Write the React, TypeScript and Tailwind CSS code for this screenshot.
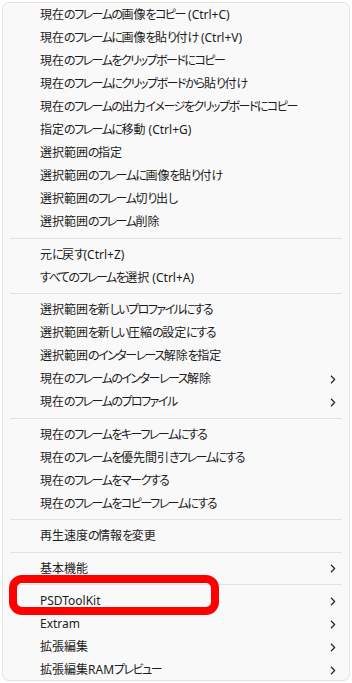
const groups: { label: string; sub?: boolean }[][] = [
  [
    { label: '現在のフレームの画像をコピー (Ctrl+C)' },
    { label: '現在のフレームに画像を貼り付け (Ctrl+V)' },
    { label: '現在のフレームをクリップボードにコピー' },
    { label: '現在のフレームにクリップボードから貼り付け' },
    { label: '現在のフレームの出力イメージをクリップボードにコピー' },
    { label: '指定のフレームに移動 (Ctrl+G)' },
    { label: '選択範囲の指定' },
    { label: '選択範囲のフレームに画像を貼り付け' },
    { label: '選択範囲のフレーム切り出し' },
    { label: '選択範囲のフレーム削除' },
  ],
  [{ label: '元に戻す(Ctrl+Z)' }, { label: 'すべてのフレームを選択 (Ctrl+A)' }],
  [
    { label: '選択範囲を新しいプロファイルにする' },
    { label: '選択範囲を新しい圧縮の設定にする' },
    { label: '選択範囲のインターレース解除を指定' },
    { label: '現在のフレームのインターレース解除', sub: true },
    { label: '現在のフレームのプロファイル', sub: true },
  ],
  [
    { label: '現在のフレームをキーフレームにする' },
    { label: '現在のフレームを優先間引きフレームにする' },
    { label: '現在のフレームをマークする' },
    { label: '現在のフレームをコピーフレームにする' },
  ],
  [{ label: '再生速度の情報を変更' }],
  [{ label: '基本機能', sub: true }],
  [
    { label: 'PSDToolKit', sub: true },
    { label: 'Extram', sub: true },
    { label: '拡張編集', sub: true },
    { label: '拡張編集RAMプレビュー', sub: true },
  ],
];

// kana in the menu font is narrower than in Noto, so tighten just those runs
function Label({ text }: { text: string }) {
  const parts = text.match(/[\u3040-\u30ff]+|[^\u3040-\u30ff]+/g) ?? [];
  return (
    <span className="whitespace-nowrap">
      {parts.map((p, i) =>
        /[\u3040-\u30ff]/.test(p) ? (
          <span key={i} className="tracking-[-1.5px]">
            {p}
          </span>
        ) : (
          <span key={i}>{p}</span>
        ),
      )}
    </span>
  );
}

function Chevron() {
  return (
    <svg width="6" height="9" viewBox="0 0 6 9" className="shrink-0">
      <path d="M1 0.8 L4.6 4.5 L1 8.2" fill="none" stroke="#2b2b2b" strokeWidth="1.3" />
    </svg>
  );
}

export default function App() {
  return (
    <div className="relative h-[683px] w-[352px] bg-white p-[2px] font-['Noto_Sans','Noto_Sans_CJK_JP',sans-serif] text-[12px] text-[#1c1c1c] [font-feature-settings:'palt']">
      <div className="h-[679px] w-[348px] overflow-hidden rounded-[7px] border border-[#e3e3e3] bg-[#f9f9f9] pt-[0.5px]">
        {groups.map((g, gi) => (
          <div key={gi}>
            {gi > 0 && (
              <div className="flex h-[9.5px] items-center px-[7px]">
                <div className="h-px w-full bg-[#e1e1e1]" />
              </div>
            )}
            {g.map((item) => (
              <div
                key={item.label}
                className="flex h-[23px] items-center justify-between pl-[37px] pr-[13px] leading-none"
              >
                <Label text={item.label} />
                {item.sub && <Chevron />}
              </div>
            ))}
          </div>
        ))}
      </div>

      {/* highlight */}
      <div className="absolute left-[9px] top-[575px] h-[40px] w-[210px] rounded-[13px] border-[8px] border-[#ff0000]" />
    </div>
  );
}
